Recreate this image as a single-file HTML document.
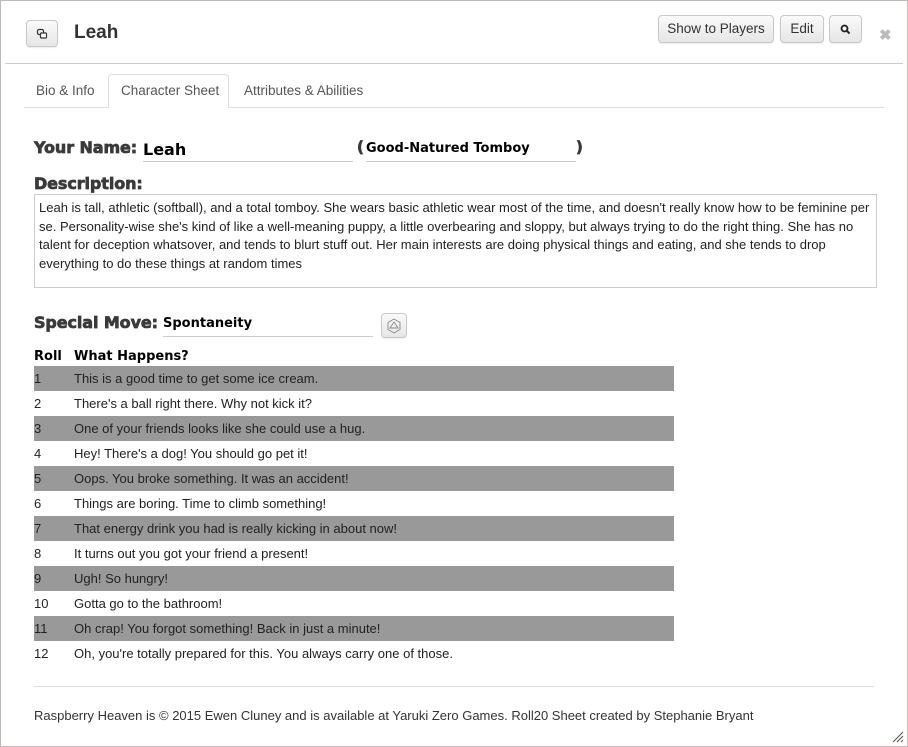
<!DOCTYPE html>
<html><head><meta charset="utf-8"><style>
*{box-sizing:border-box;margin:0;padding:0}
body{width:908px;height:747px;background:#fff;font-family:"Liberation Sans",Arial,sans-serif;color:#333;position:relative;overflow:hidden}
.win{position:absolute;left:0;top:0;width:908px;height:747px;border:1px solid #bbb;border-right-color:#d9b8b8;border-bottom-color:#d9b8b8}
.btn{position:absolute;border:1px solid #c8c8c8;border-radius:4px;background:linear-gradient(#fafafa,#e6e6e6);font-size:13.5px;color:#333;text-align:center;line-height:26px;box-shadow:0 1px 1px rgba(0,0,0,.08)}
.abs{position:absolute}
.hd{font-family:"DejaVu Sans",sans-serif;font-weight:bold;font-size:16px;color:#3a3a3a;letter-spacing:-0.1px;-webkit-text-stroke:.7px #3a3a3a}
.inp{position:absolute;border-bottom:1px solid #ccc;font-family:"DejaVu Sans",sans-serif;font-weight:bold;color:#000}
table{position:absolute;left:34px;top:366px;width:640px;border-collapse:collapse;font-size:13px;color:#222}
td{height:25px;padding:0;vertical-align:middle}
td:first-child{width:40px}
tr.g{background:#999}
</style></head><body>
<div class="win"></div>
<div class="btn" style="left:26px;top:20px;width:32px;height:27px;font-size:12px">
<svg width="12" height="12" viewBox="0 0 12 12" style="margin-top:7px"><rect x="1.5" y="1.5" width="6" height="5" rx="1.5" fill="none" stroke="#333" stroke-width="1.2"/><rect x="4.5" y="5" width="6" height="5" rx="1" fill="#fff" stroke="#333" stroke-width="1.2"/></svg></div>
<div class="abs" style="left:74px;top:22px;font-size:19px;font-weight:bold;color:#333">Leah</div>
<div class="btn" style="left:658px;top:15px;width:116px;height:28px">Show to Players</div>
<div class="btn" style="left:780px;top:15px;width:44px;height:28px">Edit</div>
<div class="btn" style="left:829px;top:15px;width:33px;height:28px"><svg width="11" height="11" viewBox="0 0 11 11" style="margin-top:8px"><circle cx="4.5" cy="4.5" r="3" fill="none" stroke="#222" stroke-width="1.8"/><path d="M6.7 6.7L9.5 9.5" stroke="#222" stroke-width="2"/></svg></div>
<div class="abs" style="left:879px;top:26px;font-size:15px;color:#bbb;font-weight:bold">✖</div>
<div class="abs" style="left:5px;top:63px;width:898px;height:1px;background:#ccc"></div>
<div class="abs" style="left:24px;top:107px;width:860px;height:1px;background:#ddd"></div>
<div class="abs" style="left:108px;top:74px;width:121px;height:34px;border:1px solid #ddd;border-bottom:1px solid #fff;border-radius:4px 4px 0 0;background:#fff"></div>
<div class="abs" style="left:36px;top:83px;font-size:13.5px;color:#555">Bio &amp; Info</div>
<div class="abs" style="left:121px;top:83px;font-size:13.5px;color:#555">Character Sheet</div>
<div class="abs" style="left:244px;top:83px;font-size:13.5px;color:#555">Attributes &amp; Abilities</div>

<div class="abs hd" style="left:34px;top:138px">Your Name:</div>
<div class="inp" style="left:143px;top:140px;width:210px;height:22px;font-size:16px">Leah</div>
<div class="abs hd" style="left:357px;top:138px;font-size:15px">(</div>
<div class="inp" style="left:366px;top:141px;width:210px;height:21px;font-size:13px">Good-Natured Tomboy</div>
<div class="abs hd" style="left:576px;top:138px;font-size:15px">)</div>

<div class="abs hd" style="left:34px;top:174px">Description:</div>
<div class="abs" style="left:34px;top:194px;width:843px;height:94px;border:1px solid #ccc;padding:4px 4px;font-size:13px;line-height:18.5px;color:#222">Leah is tall, athletic (softball), and a total tomboy. She wears basic athletic wear most of the time, and doesn't really know how to be feminine per se. Personality-wise she's kind of like a well-meaning puppy, a little overbearing and sloppy, but always trying to do the right thing. She has no talent for deception whatsover, and tends to blurt stuff out. Her main interests are doing physical things and eating, and she tends to drop everything to do these things at random times</div>

<div class="abs hd" style="left:34px;top:313px">Special Move:</div>
<div class="inp" style="left:163px;top:316px;width:210px;height:21px;font-size:13px">Spontaneity</div>
<div class="btn" style="left:381px;top:313px;width:26px;height:25px"><svg width="16" height="16" viewBox="0 0 16 16" style="margin-top:4px"><path d="M8 1L14 4.5V11.5L8 15L2 11.5V4.5Z M8 4L12 10H4Z" fill="none" stroke="#888" stroke-width=".9"/></svg></div>

<div class="abs" style="left:34px;top:349px;font-family:'DejaVu Sans',sans-serif;font-weight:bold;font-size:13px;color:#000">Roll</div>
<div class="abs" style="left:74px;top:349px;font-family:'DejaVu Sans',sans-serif;font-weight:bold;font-size:13px;color:#000">What Happens?</div>
<table>
<tr class="g"><td>1</td><td>This is a good time to get some ice cream.</td></tr>
<tr><td>2</td><td>There's a ball right there. Why not kick it?</td></tr>
<tr class="g"><td>3</td><td>One of your friends looks like she could use a hug.</td></tr>
<tr><td>4</td><td>Hey! There's a dog! You should go pet it!</td></tr>
<tr class="g"><td>5</td><td>Oops. You broke something. It was an accident!</td></tr>
<tr><td>6</td><td>Things are boring. Time to climb something!</td></tr>
<tr class="g"><td>7</td><td>That energy drink you had is really kicking in about now!</td></tr>
<tr><td>8</td><td>It turns out you got your friend a present!</td></tr>
<tr class="g"><td>9</td><td>Ugh! So hungry!</td></tr>
<tr><td>10</td><td>Gotta go to the bathroom!</td></tr>
<tr class="g"><td>11</td><td>Oh crap! You forgot something! Back in just a minute!</td></tr>
<tr><td>12</td><td>Oh, you're totally prepared for this. You always carry one of those.</td></tr>
</table>
<div class="abs" style="left:34px;top:686px;width:840px;height:1px;background:#ddd"></div>
<div class="abs" style="left:34px;top:708px;font-size:13px;color:#333">Raspberry Heaven is © 2015 Ewen Cluney and is available at Yaruki Zero Games. Roll20 Sheet created by Stephanie Bryant</div>
<svg class="abs" style="left:892px;top:731px" width="12" height="12"><path d="M11 1L1 11M11 5L5 11M11 9L9 11" stroke="#555" stroke-width="1"/></svg>
</body></html>
